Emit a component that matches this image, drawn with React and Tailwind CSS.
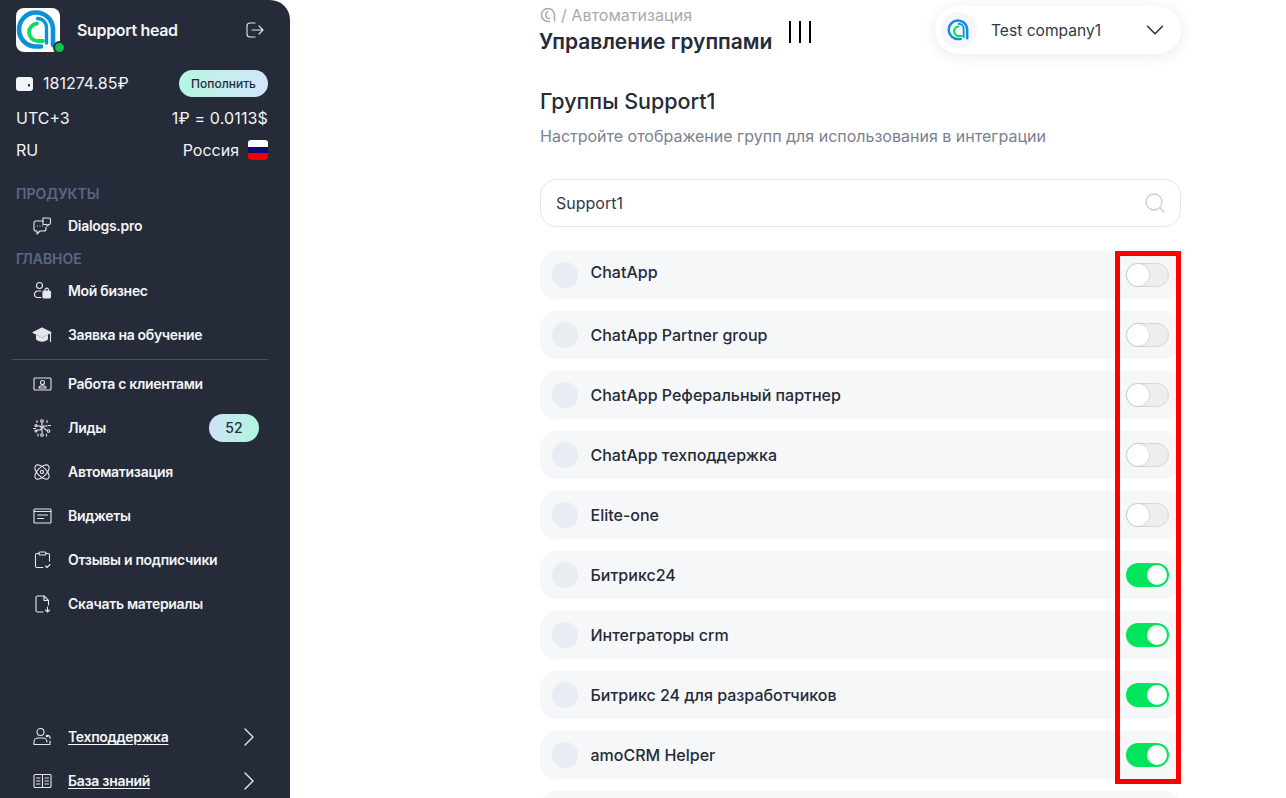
import { ChevronDown, ChevronRight, Search } from "lucide-react";

const Logo = ({ className }) => (
  <svg viewBox="0 0 44 44" fill="none" className={className}>
    <path d="M25 38.500H21A17 17 0 1 1 37 20.500V37" stroke="#0b90dc" strokeWidth="4.600" strokeLinecap="round" />
    <path d="M21.500 10.500A9 9 0 0 1 30.500 19.500V35" stroke="#0b90dc" strokeWidth="3.400" strokeLinecap="round" />
    <path d="M21 15.500A9 9 0 0 0 13 24.500A9 9 0 0 0 22 33H27" stroke="#14d85f" strokeWidth="3.800" strokeLinecap="round" />
  </svg>
);

const Icon = ({ children }) => (
  <svg
    viewBox="0 0 20 20"
    fill="none"
    stroke="currentColor"
    strokeWidth="1.1"
    strokeLinecap="round"
    strokeLinejoin="round"
    className="w-5 h-5 shrink-0 text-gray-200"
  >
    {children}
  </svg>
);

const icons = {
  dialogs: (
    <Icon>
      <path d="M11 5H4a2 2 0 0 0-2 2v6a2 2 0 0 0 2 2h1v3l3-3h4a2 2 0 0 0 2-2v-2" />
      <path d="M11 2h6a1.500 1.500 0 0 1 1.500 1.500V7a1.500 1.500 0 0 1-1.500 1.500h-1V10l-2-1.500h-3z" />
      <path d="M5.500 10h.01M8 10h.01M10.500 10h.01" />
    </Icon>
  ),
  business: (
    <Icon>
      <circle cx="7.500" cy="4.500" r="3" />
      <path d="M9 10H6a3.500 3.500 0 0 0-3.500 3A3 3 0 0 0 6 16.500h3" />
      <rect x="11" y="10" width="7.500" height="7" rx="1" fill="currentColor" />
      <path d="M13 10V8.500a1.800 1.800 0 0 1 3.500 0V10" />
    </Icon>
  ),
  study: (
    <Icon>
      <path d="M10 3 1 7.500l9 4.500 9-4.500z" fill="currentColor" />
      <path d="M4.500 10.500V14c2 2.800 9 2.800 11 0v-3.500l-5.500 2.700z" fill="currentColor" />
      <path d="M18.500 8v8.500" />
    </Icon>
  ),
  clients: (
    <Icon>
      <rect x="2" y="4" width="17" height="12" rx="1" />
      <circle cx="10.500" cy="8.500" r="2" />
      <path d="M7 14c0-3 7-3 7 0z" />
    </Icon>
  ),
  leads: (
    <Icon>
      <path d="M10 5v10M5 8h3l2 2 2-2h3M5 12h3l2-2M12 10l2 2h1" />
      <circle cx="10" cy="3" r="1.300" />
      <circle cx="10" cy="17" r="1.300" />
      <circle cx="16.500" cy="13" r="1.300" />
      <circle cx="4" cy="13" r="1" />
      <circle cx="4" cy="7.500" r="1" />
      <path d="M16 7.500h2.500M1.500 10.500h2M5 2.500v2M15 2.500v2M6 16v2M14.500 16v2" />
    </Icon>
  ),
  auto: (
    <Icon>
      <circle cx="10" cy="10" r="1.600" />
      <ellipse cx="10" cy="10" rx="9" ry="4.500" transform="rotate(45 10 10)" />
      <ellipse cx="10" cy="10" rx="9" ry="4.500" transform="rotate(-45 10 10)" />
    </Icon>
  ),
  widgets: (
    <Icon>
      <rect x="2" y="3" width="17" height="14" rx="1" />
      <path d="M2 5.500h17M5.500 9h10M5.500 12.500h6" />
    </Icon>
  ),
  reviews: (
    <Icon>
      <path d="M7 3.500H5a1.500 1.500 0 0 0-1.500 1.500v11A1.500 1.500 0 0 0 5 17.500h6" />
      <path d="M14 3.500h2A1.500 1.500 0 0 1 17.500 5v6" />
      <rect x="7" y="2" width="7" height="3" rx="1" />
      <path d="m13.500 16 1.500 1.500 3-3" />
    </Icon>
  ),
  download: (
    <Icon>
      <path d="M11 18H5.500A1.500 1.500 0 0 1 4 16.500v-13A1.500 1.500 0 0 1 5.500 2H12l4.500 4.500V11" />
      <path d="M12 2v4.500h4.500M15.500 13v5M13.500 16l2 2 2-2" />
    </Icon>
  ),
  support: (
    <Icon>
      <circle cx="8.500" cy="5" r="3.500" />
      <path d="M2 17.500V15a4 4 0 0 1 4-4h5a4 4 0 0 1 4 4M2 17.500h16V14M15 8.500a2.500 2.500 0 0 1 3 3" />
      <circle cx="15" cy="9" r=".8" fill="currentColor" />
    </Icon>
  ),
  book: (
    <Icon>
      <rect x="2" y="3.500" width="17" height="13" rx="1" />
      <path d="M10.500 3.500v13M4.500 7H8M4.500 10H8M4.500 13H8M13 7h3.500M13 10h3.500M13 13h3.500" />
    </Icon>
  ),
};

const NavItem = ({ icon, label, badge }) => (
  <div className="flex items-center h-11 pl-8 pr-[31px] text-sm font-semibold tracking-[-0.3px] text-gray-100">
    {icons[icon]}
    <span className="ml-4 flex-1">{label}</span>
    {badge && (
      <span className="w-[50px] h-7 rounded-full bg-gradient-to-r from-[#cde3fb] to-[#aef6dd] flex items-center justify-center text-[#252b39] font-medium tracking-normal">
        {badge}
      </span>
    )}
  </div>
);

const FooterItem = ({ icon, label }) => (
  <div className="flex items-center h-11 pl-8 pr-[31px] text-sm font-semibold tracking-[-0.3px] text-gray-100">
    {icons[icon]}
    <span className="ml-4 flex-1 underline underline-offset-2">{label}</span>
    <ChevronRight size={32} strokeWidth={1} className="text-gray-200 -mr-[6px]" />
  </div>
);

const Sidebar = () => (
  <aside className="w-[290px] h-[798px] shrink-0 bg-[#252b39] rounded-tr-[20px] overflow-hidden flex flex-col text-white">
    <div className="flex items-center pt-2 pl-4 pr-[26px]">
      <div className="relative w-11 h-11 rounded-lg bg-white shrink-0">
        <Logo className="w-11 h-11" />
        <span className="absolute -right-[6px] -bottom-[2px] w-[9px] h-[9px] rounded-full bg-[#0fc24f] border-2 border-[#252b39] box-content" />
      </div>
      <span className="ml-[17px] flex-1 text-base font-semibold tracking-[-0.35px] text-gray-100">Support head</span>
      <svg viewBox="0 0 18 16" fill="none" stroke="currentColor" strokeWidth="1.100" strokeLinecap="round" strokeLinejoin="round" className="w-[18px] h-4 text-gray-200">
        <path d="M9 1H4a3 3 0 0 0-3 3v8a3 3 0 0 0 3 3h5" />
        <path d="M6 8h11M13 4l4 4-4 4" />
      </svg>
    </div>

    <div className="mt-[18px] pl-4 pr-[22px] text-base text-gray-100">
      <div className="flex items-center justify-between h-[27px]">
        <div className="flex items-center">
          <svg viewBox="0 0 17 14" className="w-[17px] h-[14px] text-gray-100" fill="currentColor">
            <rect x="0" y="0" width="17" height="14" rx="3" />
            <rect x="12" y="7" width="2" height="2.500" rx=".5" fill="#252b39" />
          </svg>
          <span className="ml-[10px] -mt-px">181274.85₽</span>
        </div>
        <button className="w-[89px] h-[27px] rounded-full bg-gradient-to-r from-[#b4f6e1] to-[#d2e5fb] text-xs font-medium text-[#252b39]">
          Пополнить
        </button>
      </div>
      <div className="flex items-center justify-between mt-[7px] h-7">
        <span>UTC+3</span>
        <span className="tracking-[0.15px]">1₽ = 0.0113$</span>
      </div>
      <div className="flex items-center justify-between mt-1 h-7">
        <span>RU</span>
        <span className="flex items-center gap-[9px]">
          Россия
          <span className="w-5 h-5 rounded-[3px] overflow-hidden flex flex-col">
            <span className="h-[7px] bg-white" />
            <span className="h-[6px] bg-[#100a78]" />
            <span className="h-[7px] bg-[#f00000]" />
          </span>
        </span>
      </div>
    </div>

    <div className="mt-[21px] pl-4 h-[18px] leading-[18px] text-sm font-semibold text-[#5b6785]">ПРОДУКТЫ</div>
    <div className="mt-[1px]">
      <NavItem icon="dialogs" label="Dialogs.pro" />
    </div>
    <div className="mt-[2px] pl-4 h-[18px] leading-[18px] text-sm font-semibold text-[#5b6785]">ГЛАВНОЕ</div>
    <div className="mt-[1px]">
      <NavItem icon="business" label="Мой бизнес" />
      <NavItem icon="study" label="Заявка на обучение" />
    </div>
    <div className="ml-3 mr-[22px] border-t border-[#4b505d] mt-[2px]" />
    <div className="mt-[2px]">
      <NavItem icon="clients" label="Работа с клиентами" />
      <NavItem icon="leads" label="Лиды" badge="52" />
      <NavItem icon="auto" label="Автоматизация" />
      <NavItem icon="widgets" label="Виджеты" />
      <NavItem icon="reviews" label="Отзывы и подписчики" />
      <NavItem icon="download" label="Скачать материалы" />
    </div>
    <div className="mt-[89px]">
      <FooterItem icon="support" label="Техподдержка" />
      <FooterItem icon="book" label="База знаний" />
    </div>
  </aside>
);

const groups = [
  { name: "ChatApp", on: false },
  { name: "ChatApp Partner group", on: false },
  { name: "ChatApp Реферальный партнер", on: false },
  { name: "ChatApp техподдержка", on: false },
  { name: "Elite-one", on: false },
  { name: "Битрикс24", on: true },
  { name: "Интеграторы crm", on: true },
  { name: "Битрикс 24 для разработчиков", on: true },
  { name: "amoCRM Helper", on: true },
  { name: "", on: true },
];

const Toggle = ({ on }) =>
  on ? (
    <div className="w-[43px] h-6 rounded-full bg-[#00e55b] flex items-center justify-end pr-[2px]">
      <div className="w-5 h-5 rounded-full bg-white" />
    </div>
  ) : (
    <div className="w-[43px] h-6 rounded-full bg-[#eeeeee] border border-[#d8d8d8] flex items-center">
      <div className="w-[22px] h-[22px] rounded-full bg-white shadow-[0_0_2px_rgba(0,0,0,0.25)]" />
    </div>
  );

const GroupRow = ({ name, on, first }) => (
  <div className="h-12 shrink-0 rounded-2xl bg-[#f6f7f9] flex items-center pl-3 pr-3">
    <div className="w-[26px] h-[26px] rounded-full bg-[#e8ecf3]" />
    <span className={`ml-[12.5px] flex-1 text-base font-medium text-[#252b39] ${first ? "-mt-1.5" : ""}`}>{name}</span>
    <Toggle on={on} />
  </div>
);

export default function App() {
  return (
    <div className="flex w-[1286px] h-[798px] overflow-hidden bg-white font-['Inter',sans-serif]">
      <Sidebar />
      <main className="relative w-[641px] ml-[250px] shrink-0">
        <header className="flex justify-between pt-[6px]">
          <div>
            <div className="flex items-center text-base text-[#a6a9b0] h-[18px]">
              <svg viewBox="0 0 16 16" fill="none" stroke="currentColor" strokeWidth="1.500" className="w-4 h-4">
                <path d="M10 14.500H7.500A6.500 6.500 0 1 1 14.500 8V14.500" />
                <path d="M8.500 4.500A3.500 3.500 0 1 0 10 11.500" />
              </svg>
              <span className="ml-[5px] tracking-[0.05px]">/ Автоматизация</span>
            </div>
            <div className="flex items-start">
              <h1 className="text-[21px] leading-7 mt-[4px] font-semibold text-[#252b39] -ml-px">
                Управление группами
              </h1>
              <div className="ml-[17px] flex gap-2 -mt-[3px]">
                <span className="w-[2px] h-[22px] bg-black" />
                <span className="w-[2px] h-[22px] bg-black" />
                <span className="w-[2px] h-[22px] bg-black" />
              </div>
            </div>
          </div>
          <div className="w-[246px] h-12 rounded-full bg-white shadow-[0_2px_14px_rgba(30,40,70,0.1)] flex items-center pl-[6px] pr-[17px]">
            <div className="w-9 h-9 rounded-full bg-[#f4f6f9] flex items-center justify-center">
              <Logo className="w-6 h-6" />
            </div>
            <span className="ml-[14px] mt-px flex-1 text-[15.6px] text-[#333946]">Test company1</span>
            <ChevronDown size={30} strokeWidth={1.2} className="text-[#252b39] -mr-[6px]" />
          </div>
        </header>

        <h2 className="mt-[29px] text-[21.5px] leading-8 font-medium text-[#252b39]">Группы Support1</h2>
        <p className="mt-[7px] text-base leading-6 text-[#7b8190]">Настройте отображение групп для использования в интеграции</p>

        <div className="mt-[31px] h-12 rounded-2xl border border-[#e5e6ee] flex items-center pl-[15px] pr-[13px]">
          <span className="flex-1 text-base text-[#333946]">Support1</span>
          <Search size={24} strokeWidth={1.3} className="text-[#c9cbd0]" />
        </div>

        <div className="mt-[24px] flex flex-col gap-3">
          {groups.map((g, i) => (
            <GroupRow key={i} name={g.name} on={g.on} first={i === 0} />
          ))}
        </div>

        {/* red highlight over the toggles */}
        <div className="absolute left-[575px] top-[251px] w-[66px] h-[533px] border-[5px] border-[#ff0000]" />
      </main>
    </div>
  );
}
